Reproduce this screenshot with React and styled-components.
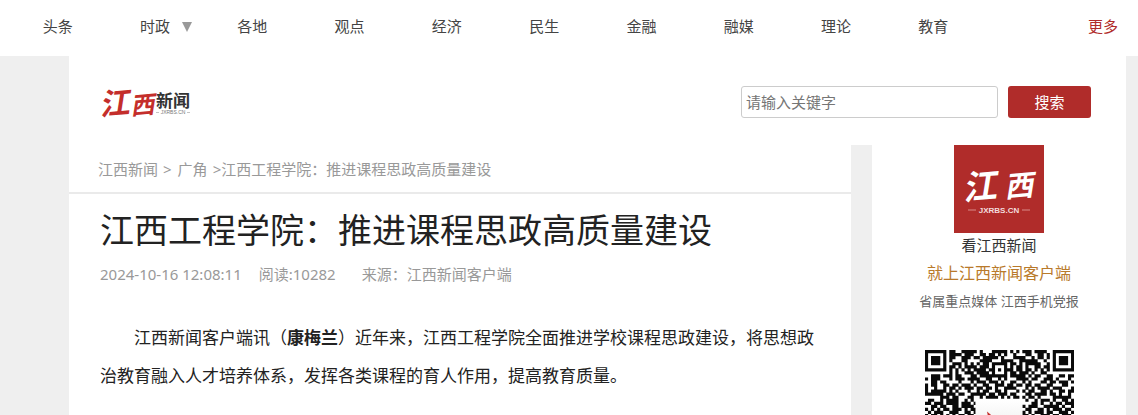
import React from 'react'
import styled, { createGlobalStyle } from 'styled-components'

const GlobalStyle = createGlobalStyle`
  * {
    box-sizing: border-box;
  }

  body {
    margin: 0;
    background: #efefef;
    color: #222;
    font-family: "Noto Sans", "Noto Sans CJK SC", sans-serif;
    font-size: 15px;
  }

  a {
    color: inherit;
    text-decoration: none;
  }
`

const Page = styled.div`
  display: flex;
  flex-direction: column;
  height: 100vh;
  overflow: hidden;
`

const NavBar = styled.nav`
  display: flex;
  flex: none;
  align-items: center;
  height: 56px;
  padding: 0 20px 4px 9px;
  background: #fff;
  color: #444;
`

const NavList = styled.ul`
  display: grid;
  flex: 1;
  grid-template-columns: repeat(10, 1fr);
  margin: 0 106px 0 0;
  padding: 0;
  list-style: none;
`

const NavItem = styled.li`
  display: flex;
  align-items: center;
  justify-content: center;
  line-height: 24px;
`

const NavLink = styled.a`
  position: relative;
`

const Caret = styled.span`
  position: absolute;
  top: 8px;
  left: 42px;
  border: 5px solid transparent;
  border-top: 10px solid #999;
  border-bottom: 0;
`

const MoreLink = styled.a`
  color: #b02c2a;
  line-height: 24px;
`

const Wrapper = styled.div`
  display: flex;
  flex: 1;
  flex-direction: column;
  margin: 0 12px 0 69px;
`

const Header = styled.header`
  display: flex;
  flex: none;
  align-items: center;
  justify-content: space-between;
  height: 89px;
  padding: 2px 35px 0 30px;
  background: #fff;
`

const LogoLink = styled.a`
  display: flex;
`

const SearchForm = styled.form`
  display: flex;
  gap: 10px;
`

const SearchInput = styled.input`
  width: 257px;
  height: 32px;
  padding: 0 4px;
  border: 1px solid #ccc;
  border-radius: 3px;
  background: #fff;
  font-family: inherit;
  font-size: 15px;

  &::placeholder {
    color: #757575;
  }
`

const SearchButton = styled.button`
  width: 83px;
  height: 32px;
  padding: 0;
  border: 0;
  border-radius: 3px;
  background: #b02c2a;
  color: #fff;
  font-family: inherit;
  font-size: 15px;
`

const Columns = styled.div`
  display: flex;
  flex: 1;
  gap: 21px;
`

const Main = styled.main`
  flex: 1;
  background: #fff;
`

const Breadcrumb = styled.div`
  display: flex;
  height: 49px;
  padding: 0 29px;
  border-bottom: 2px solid #eaeaea;
  color: #999;
  line-height: 48px;
`

const Arrow = styled.span`
  margin-left: 5px;
`

const CrumbLink = styled.a`
  & + ${Arrow} + & {
    margin-left: 6px;
  }
`

const Article = styled.article`
  padding: 12px 31px;
`

const Title = styled.h1`
  margin: 0;
  font-size: 34px;
  font-weight: 400;
  line-height: 48px;
`

const Meta = styled.div`
  display: flex;
  gap: 17px;
  color: #999;
  line-height: 40px;
`

const Source = styled.span`
  margin-left: 9px;
`

const Paragraph = styled.p`
  margin: 25px 0 0;
  font-size: 17px;
  line-height: 38px;
  text-indent: 2em;
`

const Sidebar = styled.aside`
  display: flex;
  flex: none;
  flex-direction: column;
  align-items: center;
  width: 254px;
  background: #fff;
`

const SideText = styled.div`
  color: ${props => props.$color};
  font-size: ${props => props.$size}px;
  line-height: ${props => props.$line}px;
`

const QrBox = styled.svg`
  display: block;
  width: 149px;
  height: 70px;
  margin-top: 37px;
`

const navItems = ['头条', '时政', '各地', '观点', '经济', '民生', '金融', '融媒', '理论', '教育']

// 49 modules a row, the plate of the logo covers the middle
const qrRows = [
  '1111111011001111101000111110101011101111001111111',
  '1000001011110111001101101010010001100110101000001',
  '1011101011001110110111110100011110010110101011101',
  '1011101010001100001111000111100111111001001011101',
  '1011101001110101010110111110110101111100101011101',
  '1000001011010111101110100010101101001101101000001',
  '1111111010101010111101101011101101101010101111111',
  '0000000010100111011110100010110111010011000000000',
  '0011101110110001101111111110111110101100110011011',
  '1011100010111011110011001010001111011001110100010',
  '0011011000010001011101110100110010100011011011101',
  '1011001101101110100110011101101101101100110001100',
  '1001001011010111011011010011110001010111101110001',
  '1011111010100010010110011010001010110011010011011',
  '1111110111011001111101101110110001101111011010010',
  '0000011101100011001011110101011010110100001111110',
  '0110010111100101000000000000000001001011101001101',
  '1101110111101110100000000000000000011010010110111',
  '0011011001101111000000000000000010111001111101001',
  '1010101101110101100000000000000001100110101110110',
  '0101110011100110100000000000000010101110110011101',
  '1011010101011011000000000000000011010011101101110',
  '0110111010110010100000000000000001011101011010011',
]

const qrPath = qrRows
  .map((row, y) =>
    [...row].map((cell, x) => (cell === '1' ? `M${x} ${y}h1.04v1.04h-1.04z` : '')).join('')
  )
  .join('')

const SiteLogo = () => (
  <svg width="94" height="40" viewBox="0 0 94 40" role="img" aria-label="江西新闻">
    <g fontFamily='"Noto Sans CJK SC", sans-serif' fill="#c42e2b">
      <g fontStyle="italic" fontWeight="700" transform="rotate(-5 28 20)">
        <text x="0" y="31" fontSize="30">江</text>
        <text x="31" y="33" fontSize="24">西</text>
      </g>
      <text x="57" y="25" fontSize="17" fontWeight="700" fill="#333">新闻</text>
    </g>
    <path d="M57 30.5h3M88 30.5h3" stroke="#aaa" strokeWidth=".7" />
    <text x="74" y="32" textAnchor="middle" fontFamily="Liberation Sans, sans-serif" fontSize="5" fill="#777">JXRBS.CN</text>
  </svg>
)

const AppLogo = () => (
  <svg width="90" height="88" viewBox="0 0 90 88" role="img" aria-label="江西 JXRBS.CN">
    <path d="M0 0h90v88H0z" fill="#b02c2a" />
    <g
      fontFamily='"Noto Sans CJK SC", sans-serif'
      fontStyle="italic"
      fontWeight="700"
      fill="#fff"
      transform="rotate(-5 45 40)"
    >
      <text x="8" y="52" fontSize="34">江</text>
      <text x="50" y="53" fontSize="29">西</text>
    </g>
    <path d="M14 65h8M68 65h8" stroke="#d98a88" />
    <text x="45" y="68" textAnchor="middle" fontFamily="Liberation Sans, sans-serif" fontSize="8" fontWeight="700" fill="#f3dddd">
      JXRBS.CN
    </text>
  </svg>
)

const QrCode = () => (
  <QrBox viewBox="0 0 49 23" preserveAspectRatio="xMidYMin slice" role="img" aria-label="二维码">
    <defs>
      <linearGradient id="plate" x1="0" y1="0" x2="0" y2="1">
        <stop offset="0" stopColor="#fff" />
        <stop offset="1" stopColor="#e6e6e6" />
      </linearGradient>
    </defs>
    <path d={qrPath} fill="#0a0a0a" />
    <rect x="16.6" y="16.2" width="15.4" height="15" rx="1" fill="url(#plate)" />
    <path d="M20.4 20.2l1.4 1.2.1 1.2-1 .2z" fill="#c42e2b" />
  </QrBox>
)

const App = () => (
  <Page>
    <GlobalStyle />
    <NavBar>
      <NavList>
        {navItems.map(item => (
          <NavItem key={item}>
            <NavLink href="#">
              {item}
              {item === '时政' && <Caret />}
            </NavLink>
          </NavItem>
        ))}
      </NavList>
      <MoreLink href="#">更多</MoreLink>
    </NavBar>
    <Wrapper>
      <Header>
        <LogoLink href="#"><SiteLogo /></LogoLink>
        <SearchForm>
          <SearchInput type="text" aria-label="关键字" placeholder="请输入关键字" />
          <SearchButton type="button">搜索</SearchButton>
        </SearchForm>
      </Header>
      <Columns>
        <Main>
          <Breadcrumb>
            <CrumbLink href="#">江西新闻</CrumbLink>
            <Arrow>&gt;</Arrow>
            <CrumbLink href="#">广角</CrumbLink>
            <Arrow>&gt;</Arrow>
            <span>江西工程学院：推进课程思政高质量建设</span>
          </Breadcrumb>
          <Article>
            <Title>江西工程学院：推进课程思政高质量建设</Title>
            <Meta>
              <span>2024-10-16 12:08:11</span>
              <span>阅读:10282</span>
              <Source>来源：江西新闻客户端</Source>
            </Meta>
            <Paragraph>
              江西新闻客户端讯（<strong>康梅兰</strong>）近年来，江西工程学院全面推进学校课程思政建设，将思想政治教育融入人才培养体系，发挥各类课程的育人作用，提高教育质量。
            </Paragraph>
          </Article>
        </Main>
        <Sidebar>
          <AppLogo />
          <SideText $color="#333" $size={15} $line={24}>看江西新闻</SideText>
          <SideText $color="#b97a2b" $size={16} $line={32}>就上江西新闻客户端</SideText>
          <SideText $color="#666" $size={13} $line={24}>省属重点媒体 江西手机党报</SideText>
          <QrCode />
        </Sidebar>
      </Columns>
    </Wrapper>
  </Page>
)

export default App
